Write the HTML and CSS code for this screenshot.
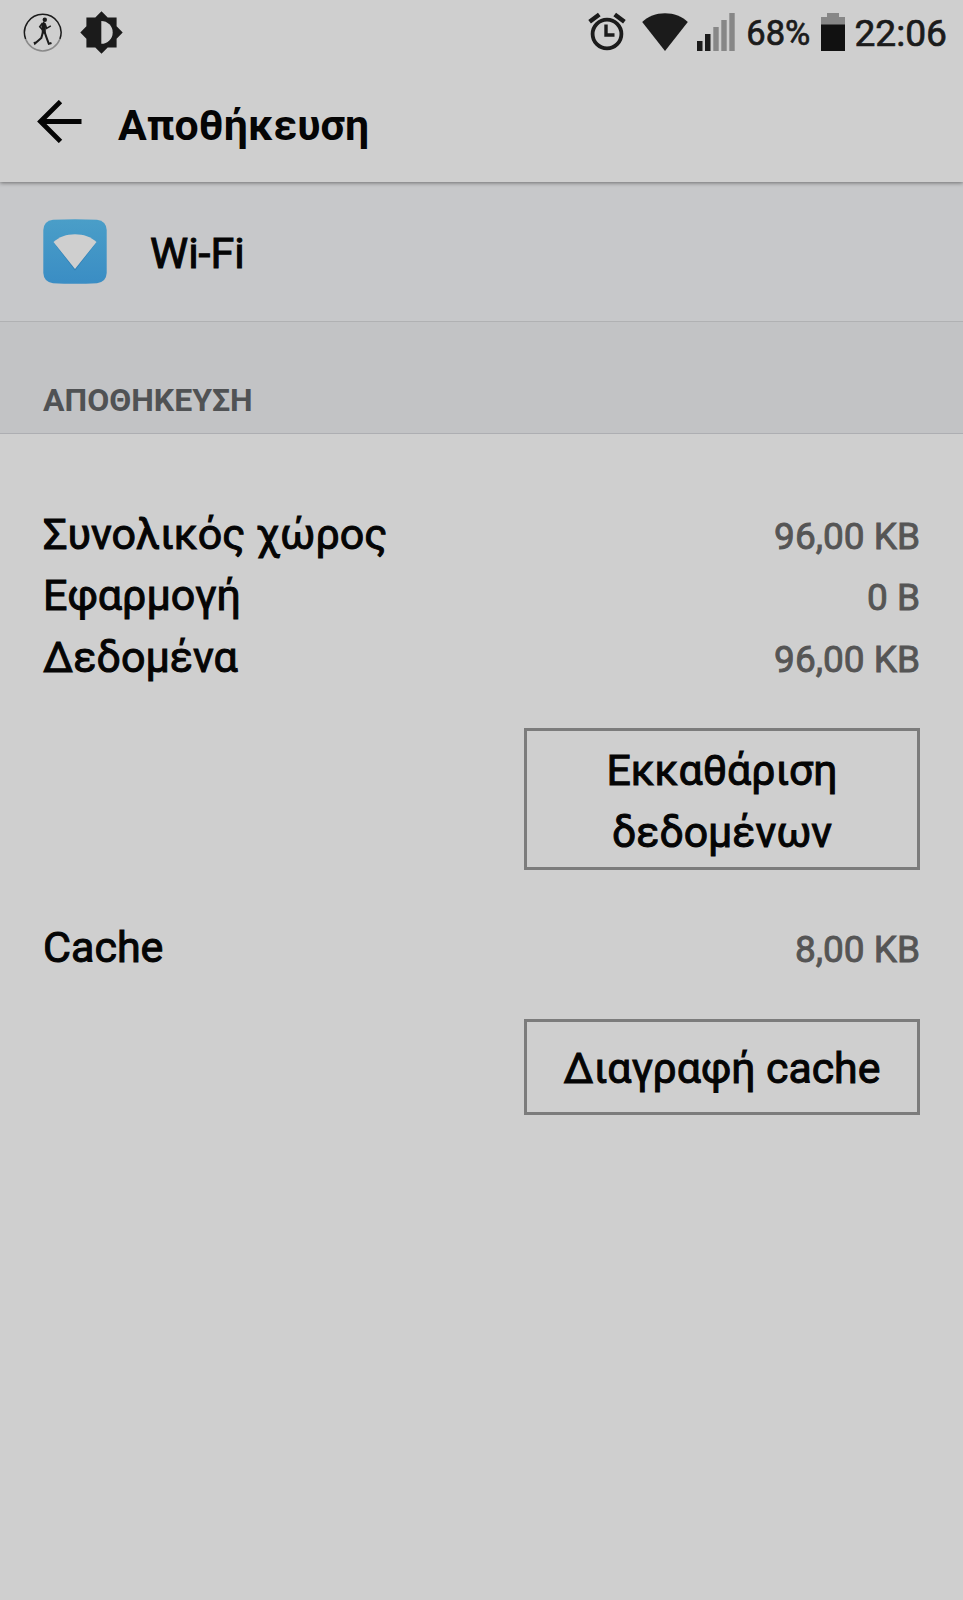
FILE: index.html
```html
<!DOCTYPE html>
<html lang="el">
<head>
    <meta charset="UTF-8">
    <meta name="viewport" content="width=device-width, initial-scale=1.0">
    <title>Αποθήκευση</title>
    <link rel="stylesheet" href="styles.css">
</head>
<body>
    <div class="status-bar">
        <svg class="icon-runner" width="40" height="40" viewBox="0 0 40 40">
            <path d="M2.6 27 A18.3 18.3 0 1 1 36.9 27" fill="none" stroke="#1b1b1b" stroke-width="1.5"/>
            <path d="M2.6 27 A18.3 18.3 0 0 0 36.9 27" fill="none" stroke="#8a8a8a" stroke-width="1.5"/>
            <circle cx="21.8" cy="7.8" r="2.2" fill="#1b1b1b"/>
            <path d="M20.3 9.5 L18.3 13 L18.9 21.5 L22.8 21.5 L22.9 11.5 Z" fill="#1b1b1b"/>
            <path d="M19.5 11 L16.7 14.7 L19.2 17.5 M22.4 12.5 L23.6 16.3 L27.8 13.8" fill="none" stroke="#1b1b1b" stroke-width="1.5"/>
            <path d="M20 20 L18.3 26 L12 31.5 L11.4 29.8 M21.6 20 L23.5 25.5 L25.8 31.8 L28.5 30.9" fill="none" stroke="#1b1b1b" stroke-width="2.1"/>
        </svg>
        <svg class="icon-brightness" width="43" height="43" viewBox="0 0 43 43">
            <path d="M21.5 0.3 L27.7 6.4 H36.6 V15.3 L42.7 21.5 L36.6 27.7 V36.6 H27.7 L21.5 42.7 L15.3 36.6 H6.4 V27.7 L0.3 21.5 L6.4 15.3 V6.4 H15.3 Z" fill="#1b1b1b"/>
            <path d="M21.3 10 A11.4 11.4 0 0 1 21.3 32.8 Z" fill="#cfcfcf"/>
        </svg>
        <span class="spacer"></span>
        <svg class="icon-alarm" width="38" height="40" viewBox="0 0 38 40">
            <circle cx="19" cy="22" r="14.4" fill="none" stroke="#1b1b1b" stroke-width="3.8"/>
            <path d="M18 12.5 V23 H26.5" fill="none" stroke="#1b1b1b" stroke-width="3.4"/>
            <path d="M1.6 9.8 L11.3 2.4 M26.7 2.4 L36.4 9.8" stroke="#1b1b1b" stroke-width="4.4"/>
        </svg>
        <svg class="icon-wifi" width="46" height="38" viewBox="0 0 46 38">
            <path d="M0.2 9 C6 3.5 14 0.2 23 0.2 S40 3.5 45.8 9 L23 38 Z" fill="#1b1b1b"/>
        </svg>
        <svg class="icon-signal" width="38" height="38" viewBox="0 0 38 38">
            <path d="M0 28 H5.5 V38 H0 Z M8 21 H13.5 V38 H8 Z" fill="#1b1b1b"/>
            <path d="M16.3 14 H21.7 V38 H16.3 Z M24.3 7 H29.7 V38 H24.3 Z M32.3 0 H37.7 V38 H32.3 Z" fill="#878787"/>
        </svg>
        <span class="percent">68%</span>
        <svg class="icon-battery" width="24" height="38" viewBox="0 0 24 38">
            <path d="M6 0 H18 V4 H24 V12 H0 V4 H6 Z" fill="#878787"/>
            <path d="M0 11.5 H24 V38 H0 Z" fill="#111"/>
        </svg>
        <span class="time">22:06</span>
    </div>

    <div class="header">
        <svg class="back" width="45" height="43" viewBox="0 0 45 43">
            <path d="M23.5 1.6 L3.5 21.5 L23.5 41.4 M3 21.5 H44.5" fill="none" stroke="#050505" stroke-width="4.8"/>
        </svg>
        <h1>Αποθήκευση</h1>
    </div>

    <div class="app-row">
        <svg class="app-icon" width="64" height="65" viewBox="0 0 64 65">
            <defs>
                <linearGradient id="tile" x1="0" y1="0" x2="0" y2="1">
                    <stop offset="0" stop-color="#4a9ec8"/>
                    <stop offset="1" stop-color="#3a8dc4"/>
                </linearGradient>
            </defs>
            <path d="M10 0.8 Q32 -0.2 54 0.8 Q63.2 2 63.7 11 V54 Q63.2 63 54 64.2 Q32 65.2 10 64.2 Q0.8 63 0.3 54 V11 Q0.8 2 10 0.8 Z" fill="url(#tile)"/>
            <path d="M10.5 23.5 L32 51.5 L53.5 23.5 L32 48 Z" fill="#2f7fb5"/>
            <path d="M10.5 23 C16 18 23.5 15.3 32 15.3 S48 18 53.5 23 L32 50 Z" fill="#cfcfcf"/>
        </svg>
        <span class="app-name">Wi-Fi</span>
    </div>

    <div class="section-title">ΑΠΟΘΗΚΕΥΣΗ</div>

    <div class="content">
        <div class="row">
            <span class="label">Συνολικός χώρος</span>
            <span class="value">96,00 KB</span>
        </div>
        <div class="row">
            <span class="label">Εφαρμογή</span>
            <span class="value">0 B</span>
        </div>
        <div class="row">
            <span class="label">Δεδομένα</span>
            <span class="value">96,00 KB</span>
        </div>
        <button class="btn btn-data">Εκκαθάριση δεδομένων</button>
        <div class="row">
            <span class="label">Cache</span>
            <span class="value">8,00 KB</span>
        </div>
        <button class="btn btn-cache">Διαγραφή cache</button>
    </div>
</body>
</html>
```
FILE: styles.css
```css
* {
    margin: 0;
    padding: 0;
    box-sizing: border-box;
    font-family: 'Roboto', sans-serif;
}

body {
    background: #cfcfcf;
    min-height: 100vh;
    color: #050505;
}

svg {
    display: block;
    flex: none;
}

.status-bar {
    height: 64px;
    display: flex;
    align-items: flex-start;
    padding: 0 16px 0 23px;
    color: #1b1b1b;
}

.icon-runner {
    margin-top: 12px;
}

.icon-brightness {
    margin: 11px 0 0 17px;
}

.spacer {
    flex: 1;
}

.icon-alarm {
    margin: 12px 16px 0 0;
}

.icon-wifi {
    margin: 13px 9px 0 0;
}

.icon-signal {
    margin: 13px 11px 0 0;
}

.percent {
    font-size: 34.5px;
    line-height: 42px;
    margin: 12px 11px 0 0;
    -webkit-text-stroke: 0.7px;
}

.icon-battery {
    margin: 13px 9px 0 0;
}

.time {
    font-size: 37.2px;
    line-height: 44px;
    margin-top: 11px;
    -webkit-text-stroke: 0.7px;
}

.header {
    position: relative;
    height: 118px;
    display: flex;
    align-items: flex-start;
    padding-left: 37px;
    background: #cfcfcf;
    box-shadow: 0 1px 4px rgba(0, 0, 0, 0.45);
    clip-path: inset(0 0 -8px 0);
}

.back {
    margin: 36px 36px 0 0;
}

h1 {
    font-size: 42.8px;
    font-weight: 700;
    line-height: 60px;
    margin-top: 31px;
}

.app-row {
    height: 140px;
    display: flex;
    align-items: center;
    gap: 43px;
    padding: 0 43px;
    background: #c7c8ca;
    border-bottom: 1px solid #b0b1b3;
}

.app-name {
    font-size: 43px;
    -webkit-text-stroke: 1px;
    padding-top: 2px;
}

.section-title {
    height: 112px;
    padding: 59px 43px 0;
    font-size: 32px;
    font-weight: 700;
    line-height: 38px;
    color: #505254;
    background: #c2c3c5;
    border-bottom: 1px solid #adaeb2;
}

.content {
    display: flex;
    flex-direction: column;
    padding: 69.6px 43px 0;
}

.row {
    display: flex;
    justify-content: space-between;
    align-items: baseline;
    height: 61.5px;
    line-height: 61.5px;
}

.label {
    font-size: 43px;
    -webkit-text-stroke: 1px;
}

.value {
    font-size: 37px;
    color: #555;
    -webkit-text-stroke: 0.9px;
}

.btn {
    align-self: flex-end;
    width: 396px;
    border: 3px solid #7c7c7c;
    background: none;
    color: #050505;
    font-size: 42.8px;
    line-height: 62px;
    -webkit-text-stroke: 1px;
}

.btn-data {
    height: 142px;
    margin: 40px 0 47px;
    padding: 3px 60px 0;
}

.btn-cache {
    height: 96px;
    margin-top: 40px;
    padding-top: 3px;
}
```
